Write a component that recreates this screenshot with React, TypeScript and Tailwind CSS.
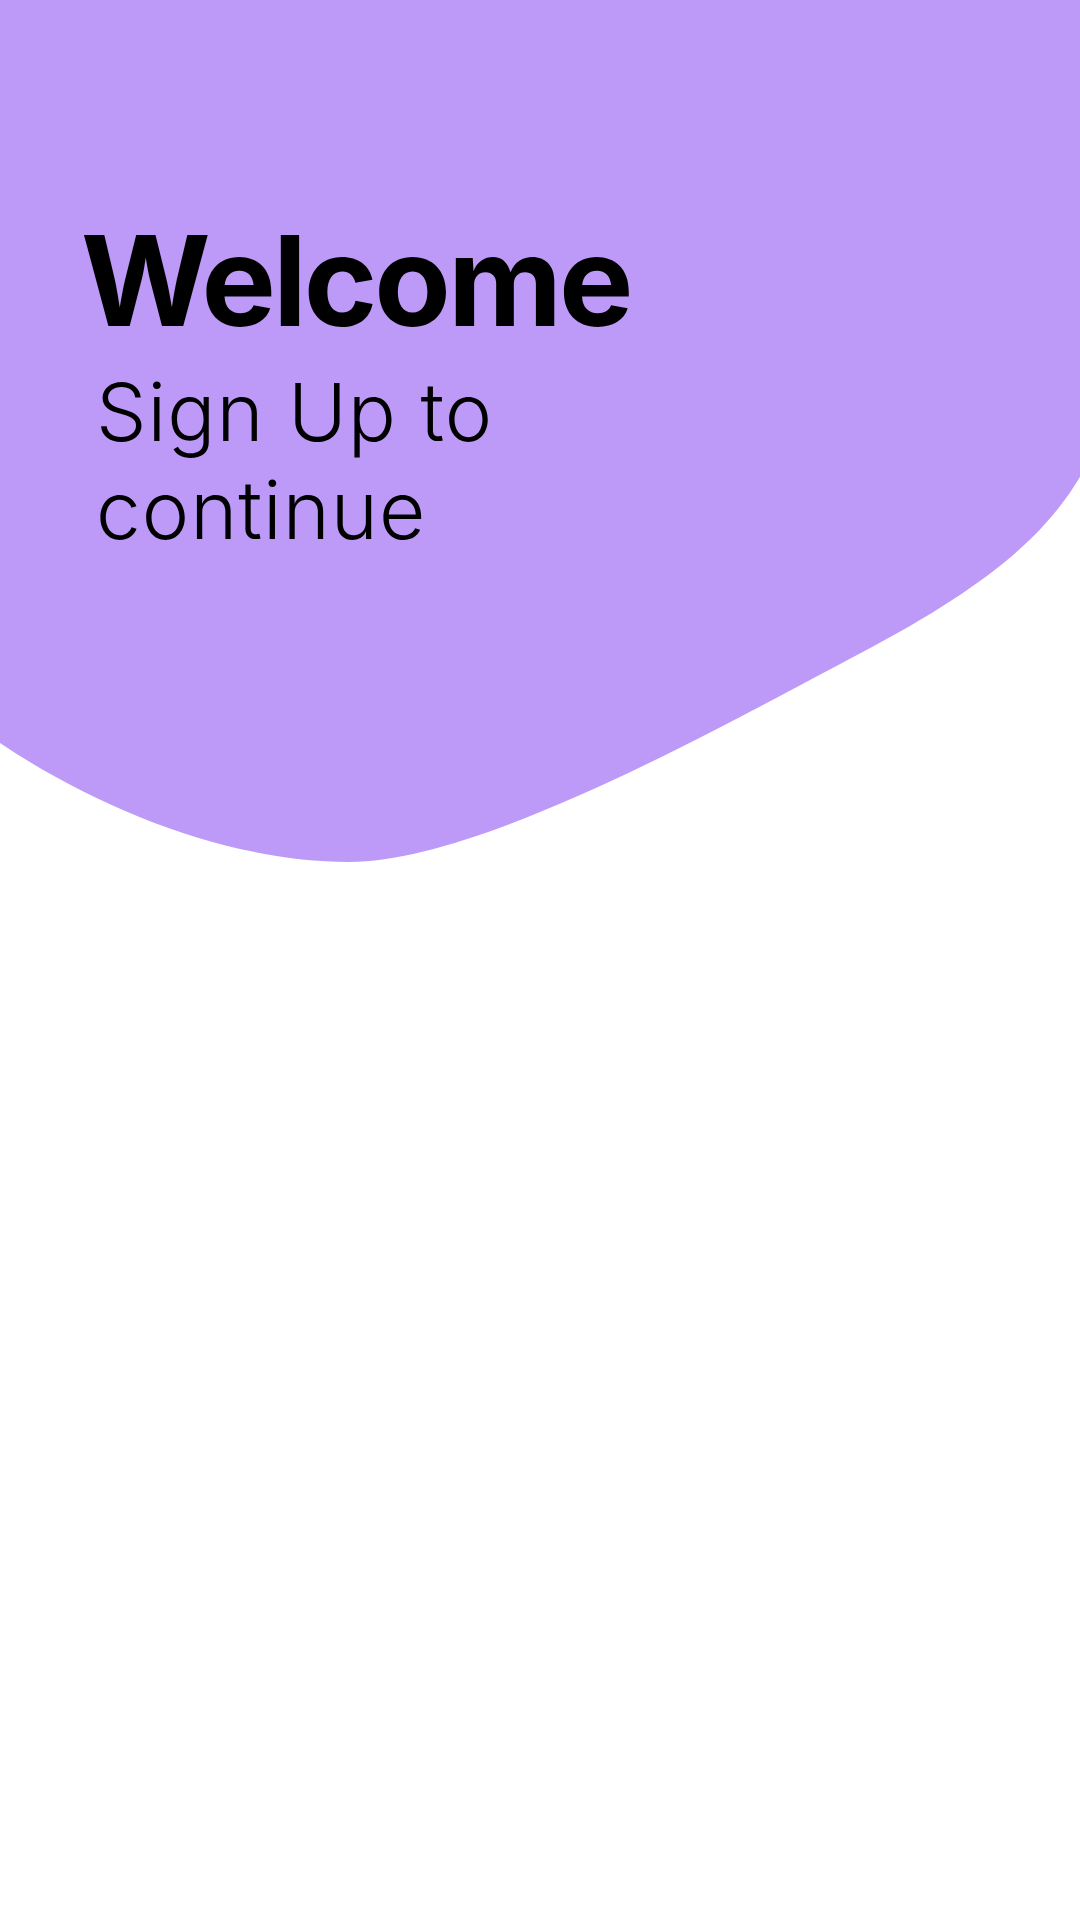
import React from "react";

const Blob = () => (
  <svg
    className="absolute left-0 top-0"
    width="1080"
    height="880"
    viewBox="0 0 1080 880"
  >
    <path
      d="M0 0 H1080 V477 C1045 535 990 585 857 655 C717 729 480 862 349 862 C230 862 100 810 0 743 Z"
      fill="#bd9af7"
    />
  </svg>
);

const App = () => {
  return (
    <div className="relative w-[1080px] h-[1920px] bg-white overflow-hidden font-['Inter',sans-serif] text-black">
      <Blob />
      <div className="relative pt-[218px] pl-[81px]">
        <h1 className="text-[125px] leading-none font-bold tracking-[-3px]">Welcome</h1>
        <p className="mt-[20px] ml-[15px] w-[480px] text-[80px] leading-[98px] font-light tracking-[1px]">
          Sign Up to continue
        </p>
      </div>
    </div>
  );
};

export default App;
